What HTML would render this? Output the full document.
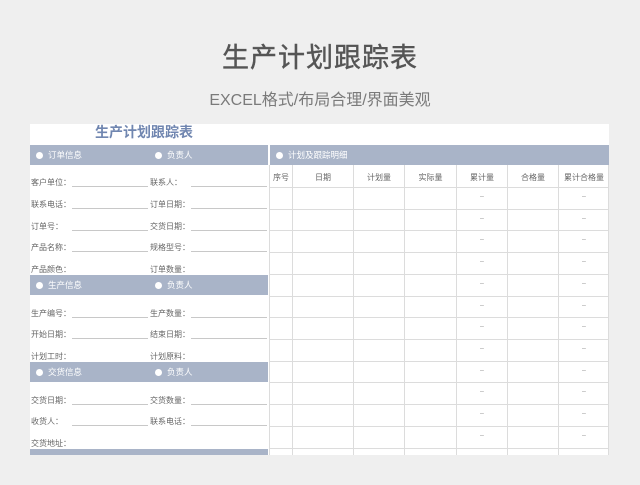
<!DOCTYPE html>
<html><head><meta charset="utf-8"><style>
*{margin:0;padding:0;box-sizing:border-box}
body{width:640px;height:485px;background:#efefef;position:relative;overflow:hidden;font-family:"Liberation Sans","Noto Sans CJK SC",sans-serif}
.a{position:absolute;white-space:nowrap}
.h1{left:0;width:640px;text-align:center;top:36px;font-size:27px;color:#555;letter-spacing:1px;-webkit-text-stroke:0.4px #555}
.h2{left:0;width:640px;text-align:center;top:86px;font-size:16px;color:#7a7a7a}
.sheet{position:absolute;left:30px;top:124px;width:579px;height:331px;background:#fff;overflow:hidden}
.bar{position:absolute;background:#a9b4c8;color:#fff;font-size:8.5px;height:20px;line-height:20px}
.dot{position:absolute;width:7px;height:7px;border-radius:50%;background:#fff;top:7px}
.lb{position:absolute;font-size:8px;color:#666;white-space:nowrap}
.ul{position:absolute;height:1px;background:#c8c8c8}
.v{position:absolute;width:1px;background:#dcdcdc;top:165px;height:290px}
.hr{position:absolute;height:1px;background:#dcdcdc;left:270px;width:339px}
.ch{position:absolute;top:172px;font-size:8px;color:#666;text-align:center}
.d{position:absolute;font-size:7px;color:#999;text-align:center}
</style></head><body>
<div class="a h1">生产计划跟踪表</div>
<div class="a h2">EXCEL格式/布局合理/界面美观</div>
<div class="sheet"></div>
<div class="a" style="left:95px;top:122px;font-size:14px;color:#7086b0;font-weight:bold">生产计划跟踪表</div>

<div class="bar" style="left:30px;top:145px;width:238px"><span class="dot" style="left:6px"></span><span class="a" style="left:18px">订单信息</span><span class="dot" style="left:125px"></span><span class="a" style="left:137px">负责人</span></div>
<div class="bar" style="left:30px;top:275px;width:238px"><span class="dot" style="left:6px"></span><span class="a" style="left:18px">生产信息</span><span class="dot" style="left:125px"></span><span class="a" style="left:137px">负责人</span></div>
<div class="bar" style="left:30px;top:362px;width:238px"><span class="dot" style="left:6px"></span><span class="a" style="left:18px">交货信息</span><span class="dot" style="left:125px"></span><span class="a" style="left:137px">负责人</span></div>
<div class="bar" style="left:30px;top:449px;width:238px;height:6px"></div>
<div class="bar" style="left:270px;top:145px;width:339px"><span class="dot" style="left:6px"></span><span class="a" style="left:18px">计划及跟踪明细</span></div>

<div class="lb" style="left:31px;top:177px">客户单位：</div><div class="ul" style="left:72px;top:186px;width:76px"></div>
<div class="lb" style="left:150px;top:177px">联系人：</div><div class="ul" style="left:191px;top:186px;width:76px"></div>
<div class="lb" style="left:31px;top:199px">联系电话：</div><div class="ul" style="left:72px;top:208px;width:76px"></div>
<div class="lb" style="left:150px;top:199px">订单日期：</div><div class="ul" style="left:191px;top:208px;width:76px"></div>
<div class="lb" style="left:31px;top:221px">订单号：</div><div class="ul" style="left:72px;top:230px;width:76px"></div>
<div class="lb" style="left:150px;top:221px">交货日期：</div><div class="ul" style="left:191px;top:230px;width:76px"></div>
<div class="lb" style="left:31px;top:242px">产品名称：</div><div class="ul" style="left:72px;top:251px;width:76px"></div>
<div class="lb" style="left:150px;top:242px">规格型号：</div><div class="ul" style="left:191px;top:251px;width:76px"></div>
<div class="lb" style="left:31px;top:264px">产品颜色：</div>
<div class="lb" style="left:150px;top:264px">订单数量：</div>

<div class="lb" style="left:31px;top:308px">生产编号：</div><div class="ul" style="left:72px;top:317px;width:76px"></div>
<div class="lb" style="left:150px;top:308px">生产数量：</div><div class="ul" style="left:191px;top:317px;width:76px"></div>
<div class="lb" style="left:31px;top:329px">开始日期：</div><div class="ul" style="left:72px;top:338px;width:76px"></div>
<div class="lb" style="left:150px;top:329px">结束日期：</div><div class="ul" style="left:191px;top:338px;width:76px"></div>
<div class="lb" style="left:31px;top:351px">计划工时：</div>
<div class="lb" style="left:150px;top:351px">计划原料：</div>

<div class="lb" style="left:31px;top:395px">交货日期：</div><div class="ul" style="left:72px;top:404px;width:76px"></div>
<div class="lb" style="left:150px;top:395px">交货数量：</div><div class="ul" style="left:191px;top:404px;width:76px"></div>
<div class="lb" style="left:31px;top:416px">收货人：</div><div class="ul" style="left:72px;top:425px;width:76px"></div>
<div class="lb" style="left:150px;top:416px">联系电话：</div><div class="ul" style="left:191px;top:425px;width:76px"></div>
<div class="lb" style="left:31px;top:438px">交货地址：</div>

<div class="v" style="left:269px"></div><div class="v" style="left:292px"></div><div class="v" style="left:353px"></div><div class="v" style="left:404px"></div><div class="v" style="left:456px"></div><div class="v" style="left:507px"></div><div class="v" style="left:558px"></div><div class="v" style="left:608px"></div>

<div class="ch" style="left:270px;width:22px">序号</div>
<div class="ch" style="left:293px;width:60px">日期</div>
<div class="ch" style="left:354px;width:50px">计划量</div>
<div class="ch" style="left:405px;width:51px">实际量</div>
<div class="ch" style="left:457px;width:50px">累计量</div>
<div class="ch" style="left:508px;width:50px">合格量</div>
<div class="ch" style="left:559px;width:50px">累计合格量</div>

<div class="hr" style="top:187px"></div><div class="hr" style="top:209px"></div><div class="hr" style="top:230px"></div><div class="hr" style="top:252px"></div><div class="hr" style="top:274px"></div><div class="hr" style="top:296px"></div><div class="hr" style="top:317px"></div><div class="hr" style="top:339px"></div><div class="hr" style="top:361px"></div><div class="hr" style="top:382px"></div><div class="hr" style="top:404px"></div><div class="hr" style="top:426px"></div><div class="hr" style="top:448px"></div>

<div class="d" style="left:457px;width:50px;top:193px">–</div><div class="d" style="left:559px;width:50px;top:193px">–</div>
<div class="d" style="left:457px;width:50px;top:215px">–</div><div class="d" style="left:559px;width:50px;top:215px">–</div>
<div class="d" style="left:457px;width:50px;top:236px">–</div><div class="d" style="left:559px;width:50px;top:236px">–</div>
<div class="d" style="left:457px;width:50px;top:258px">–</div><div class="d" style="left:559px;width:50px;top:258px">–</div>
<div class="d" style="left:457px;width:50px;top:280px">–</div><div class="d" style="left:559px;width:50px;top:280px">–</div>
<div class="d" style="left:457px;width:50px;top:302px">–</div><div class="d" style="left:559px;width:50px;top:302px">–</div>
<div class="d" style="left:457px;width:50px;top:323px">–</div><div class="d" style="left:559px;width:50px;top:323px">–</div>
<div class="d" style="left:457px;width:50px;top:345px">–</div><div class="d" style="left:559px;width:50px;top:345px">–</div>
<div class="d" style="left:457px;width:50px;top:367px">–</div><div class="d" style="left:559px;width:50px;top:367px">–</div>
<div class="d" style="left:457px;width:50px;top:388px">–</div><div class="d" style="left:559px;width:50px;top:388px">–</div>
<div class="d" style="left:457px;width:50px;top:410px">–</div><div class="d" style="left:559px;width:50px;top:410px">–</div>
<div class="d" style="left:457px;width:50px;top:432px">–</div><div class="d" style="left:559px;width:50px;top:432px">–</div>
</body></html>
